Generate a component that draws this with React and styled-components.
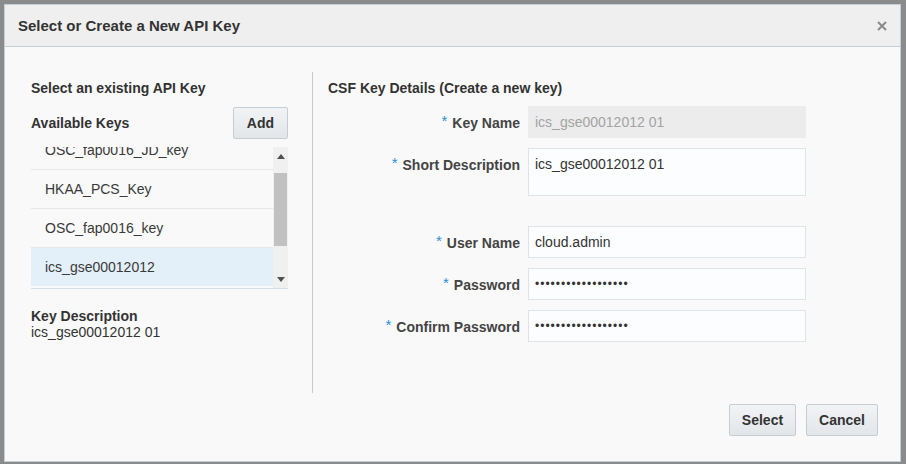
import React from "react";
import styled, { createGlobalStyle } from "styled-components";

const GlobalStyle = createGlobalStyle`
  html, body {
    margin: 0;
    padding: 0;
    background: #8b8b8b;
    font-family: "Liberation Sans", Arial, sans-serif;
  }
`;

const Page = styled.div`
  width: 906px;
  height: 464px;
  padding: 4px 0 0 4px;
  box-sizing: border-box;
`;

const Dialog = styled.div`
  width: 897px;
  height: 458px;
  box-sizing: border-box;
  border: 1px solid #c3ced8;
  background: #f9f9f9;
  display: flex;
  flex-direction: column;
`;

const Header = styled.div`
  height: 41px;
  flex: none;
  background: #efefef;
  border-bottom: 1px solid #c3ced8;
  display: flex;
  align-items: center;
  justify-content: space-between;
  padding: 0 12px 0 13px;
`;

const Title = styled.div`
  font-size: 15px;
  font-weight: bold;
  color: #333;
`;

const Close = styled.button`
  border: none;
  background: none;
  padding: 0;
  width: 12px;
  height: 12px;
  display: flex;
  cursor: pointer;
`;

const Body = styled.div`
  flex: 1;
  display: flex;
  flex-direction: column;
  padding: 25px 22px 0 26px;
`;

const Columns = styled.div`
  display: flex;
  height: 321px;
`;

const LeftCol = styled.div`
  width: 257px;
  padding-top: 8px;
  display: flex;
  flex-direction: column;
`;

const RightCol = styled.div`
  margin-left: 24px;
  border-left: 1px solid #c9c9c9;
  padding: 8px 0 0 15px;
  flex: 1;
`;

const Heading = styled.div`
  font-size: 14px;
  line-height: 16px;
  font-weight: bold;
  color: #333;
`;

const KeysBar = styled.div`
  display: flex;
  align-items: center;
  justify-content: space-between;
  margin-top: 11px;
`;

const Button = styled.button`
  height: 32px;
  padding: 0 ${(p) => p.$pad || 12}px;
  box-sizing: border-box;
  border: 1px solid #c5cdd4;
  border-radius: 2px;
  background: linear-gradient(#f1f3f5, #e3e6e9);
  font-family: "Liberation Sans", Arial, sans-serif;
  font-size: 14px;
  font-weight: bold;
  color: #333;
  cursor: pointer;
`;

const ListBox = styled.div`
  margin-top: 8px;
  height: 141px;
  border-bottom: 1px solid #d6dfe7;
  display: flex;
  overflow: hidden;
`;

const Rows = styled.div`
  flex: 1;
  overflow: hidden;
`;

const RowsInner = styled.div`
  margin-top: -16px;
`;

const Row = styled.div`
  height: 38px;
  border-bottom: 1px solid #e6e6e6;
  display: flex;
  align-items: center;
  padding-left: 14px;
  font-size: 14px;
  color: #3a3a3a;
  background: ${(p) => (p.$selected ? "#e3eff9" : "transparent")};
  &:last-child {
    border-bottom: none;
  }
`;

const ScrollTrack = styled.div`
  width: 15px;
  display: flex;
  flex-direction: column;
  align-items: center;
  background: #f0f0f0;
`;

const Arrow = styled.div`
  height: 18px;
  width: 100%;
  display: flex;
  align-items: center;
  justify-content: center;
`;

const Thumb = styled.div`
  width: 13px;
  height: 73px;
  margin-top: 8px;
  background: #c1c1c1;
`;

const TrackGap = styled.div`
  flex: 1;
`;

const DescLabel = styled.div`
  margin-top: 19px;
  font-size: 14px;
  font-weight: bold;
  color: #333;
  line-height: 16px;
`;

const DescValue = styled.div`
  font-size: 14px;
  color: #333;
  line-height: 16px;
`;

const Form = styled.div`
  margin-top: 10px;
  display: grid;
  grid-template-columns: 192px 278px;
  column-gap: 8px;
  row-gap: 10px;
  align-items: start;
`;

const Label = styled.label`
  height: 32px;
  padding-top: 1px;
  box-sizing: border-box;
  display: flex;
  align-items: center;
  justify-content: flex-end;
  font-size: 14px;
  font-weight: bold;
  color: #444;
`;

const Req = styled.span`
  color: #2a8fdb;
  font-size: 15px;
  font-weight: normal;
  align-self: flex-start;
  margin-top: 5px;
  margin-right: 5px;
`;

const Input = styled.input`
  height: 32px;
  width: 278px;
  box-sizing: border-box;
  border: 1px solid ${(p) => (p.disabled ? "#ececec" : "#dde3e8")};
  background: ${(p) => (p.disabled ? "#ececec" : "#fcfdfe")};
  color: ${(p) => (p.disabled ? "#a0a0a0" : "#333")};
  font-family: "Liberation Sans", Arial, sans-serif;
  font-size: 14px;
  padding: 0 6px;
  outline: none;
  &:disabled {
    -webkit-text-fill-color: #a3a3a3;
  }
`;

const Dots = styled(Input)`
  font-size: 12px;
  letter-spacing: 1px;
`;

const TextArea = styled.textarea`
  height: 48px;
  width: 278px;
  box-sizing: border-box;
  border: 1px solid #dde3e8;
  background: #fcfdfe;
  color: #333;
  font-family: "Liberation Sans", Arial, sans-serif;
  font-size: 14px;
  padding: 7px 6px;
  resize: none;
  outline: none;
  margin-bottom: 20px;
`;

const Footer = styled.div`
  display: flex;
  justify-content: flex-end;
  gap: 10px;
  margin-top: 11px;
`;

const keys = [
  "OSC_fap0016_JD_key",
  "HKAA_PCS_Key",
  "OSC_fap0016_key",
  "ics_gse00012012",
];

const Required = ({ children }) => (
  <Label>
    <Req>*</Req>
    {children}
  </Label>
);

export default function App() {
  return (
    <>
      <GlobalStyle />
      <Page>
        <Dialog>
          <Header>
            <Title>Select or Create a New API Key</Title>
            <Close aria-label="Close">
              <svg width="12" height="12" viewBox="0 0 12 12">
                <path d="M2 2 L10 10 M10 2 L2 10" stroke="#8a8a8a" strokeWidth="2" />
              </svg>
            </Close>
          </Header>
          <Body>
            <Columns>
              <LeftCol>
                <Heading>Select an existing API Key</Heading>
                <KeysBar>
                  <Heading>Available Keys</Heading>
                  <Button $pad={13}>Add</Button>
                </KeysBar>
                <ListBox>
                  <Rows>
                    <RowsInner>
                      {keys.map((k, i) => (
                        <Row key={k} $selected={i === keys.length - 1}>
                          {k}
                        </Row>
                      ))}
                    </RowsInner>
                  </Rows>
                  <ScrollTrack>
                    <Arrow>
                      <svg width="8" height="5" viewBox="0 0 8 5">
                        <path d="M0 5 L4 0 L8 5 Z" fill="#505050" />
                      </svg>
                    </Arrow>
                    <Thumb />
                    <TrackGap />
                    <Arrow>
                      <svg width="8" height="5" viewBox="0 0 8 5">
                        <path d="M0 0 L4 5 L8 0 Z" fill="#505050" />
                      </svg>
                    </Arrow>
                  </ScrollTrack>
                </ListBox>
                <DescLabel>Key Description</DescLabel>
                <DescValue>ics_gse00012012 01</DescValue>
              </LeftCol>
              <RightCol>
                <Heading>CSF Key Details (Create a new key)</Heading>
                <Form>
                  <Required>Key Name</Required>
                  <Input disabled value="ics_gse00012012 01" readOnly />
                  <Required>Short Description</Required>
                  <TextArea value="ics_gse00012012 01" readOnly />
                  <Required>User Name</Required>
                  <Input value="cloud.admin" readOnly />
                  <Required>Password</Required>
                  <Dots value={"•".repeat(18)} readOnly />
                  <Required>Confirm Password</Required>
                  <Dots value={"•".repeat(18)} readOnly />
                </Form>
              </RightCol>
            </Columns>
            <Footer>
              <Button $pad={12}>Select</Button>
              <Button $pad={12}>Cancel</Button>
            </Footer>
          </Body>
        </Dialog>
      </Page>
    </>
  );
}
